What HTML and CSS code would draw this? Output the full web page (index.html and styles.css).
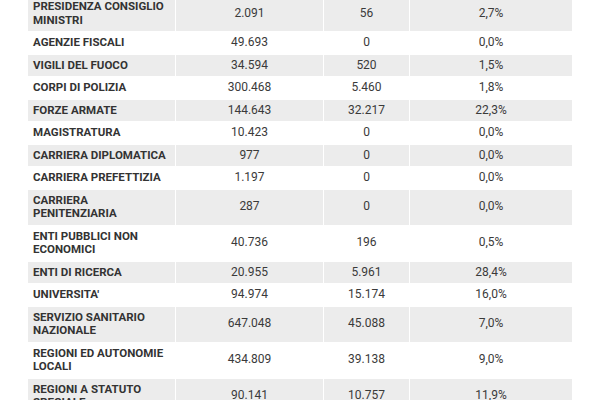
FILE: index.html
```html
<!DOCTYPE html>
<html lang="it">
<head>
<meta charset="utf-8">
<link rel="stylesheet" href="styles.css">
</head>
<body>
<table class="data">
  <colgroup>
    <col class="c-name"><col class="c-num"><col class="c-small"><col class="c-pct">
  </colgroup>
  <tbody>
    <tr class="alt"><th>PRESIDENZA CONSIGLIO MINISTRI</th><td>2.091</td><td>56</td><td>2,7%</td></tr>
    <tr><th>AGENZIE FISCALI</th><td>49.693</td><td>0</td><td>0,0%</td></tr>
    <tr class="alt"><th>VIGILI DEL FUOCO</th><td>34.594</td><td>520</td><td>1,5%</td></tr>
    <tr><th>CORPI DI POLIZIA</th><td>300.468</td><td>5.460</td><td>1,8%</td></tr>
    <tr class="alt"><th>FORZE ARMATE</th><td>144.643</td><td>32.217</td><td>22,3%</td></tr>
    <tr><th>MAGISTRATURA</th><td>10.423</td><td>0</td><td>0,0%</td></tr>
    <tr class="alt"><th>CARRIERA DIPLOMATICA</th><td>977</td><td>0</td><td>0,0%</td></tr>
    <tr><th>CARRIERA PREFETTIZIA</th><td>1.197</td><td>0</td><td>0,0%</td></tr>
    <tr class="alt"><th>CARRIERA PENITENZIARIA</th><td>287</td><td>0</td><td>0,0%</td></tr>
    <tr><th>ENTI PUBBLICI NON ECONOMICI</th><td>40.736</td><td>196</td><td>0,5%</td></tr>
    <tr class="alt"><th>ENTI DI RICERCA</th><td>20.955</td><td>5.961</td><td>28,4%</td></tr>
    <tr><th>UNIVERSITA'</th><td>94.974</td><td>15.174</td><td>16,0%</td></tr>
    <tr class="alt"><th>SERVIZIO SANITARIO NAZIONALE</th><td>647.048</td><td>45.088</td><td>7,0%</td></tr>
    <tr><th>REGIONI ED AUTONOMIE LOCALI</th><td>434.809</td><td>39.138</td><td>9,0%</td></tr>
    <tr class="alt"><th>REGIONI A STATUTO SPECIALE</th><td>90.141</td><td>10.757</td><td>11,9%</td></tr>
  </tbody>
</table>
</body>
</html>
```

FILE: styles.css
```css
html, body {
  margin: 0;
  padding: 0;
  background: #ffffff;
  overflow: hidden;
}
body {
  font-family: Roboto, "Liberation Sans", Arial, sans-serif;
  color: #333333;
}
.data {
  margin: -5px 0 0 27px;
  width: 545px;
  table-layout: fixed;
  border-collapse: collapse;
}
.c-name { width: 148px; }
.c-num { width: 148px; }
.c-small { width: 86px; }
.c-pct { width: 163px; }
.data th, .data td {
  border: 1px solid #ffffff;
  padding: 4px 5px;
  line-height: 13.5px;
  vertical-align: middle;
}
.data th {
  text-align: left;
  font-weight: 700;
  font-size: 11.5px;
  color: #333333;
}
.data td {
  text-align: center;
  font-size: 12px;
  color: #3a3a3a;
}
.data tr.alt th, .data tr.alt td {
  background: #ececec;
}
```
